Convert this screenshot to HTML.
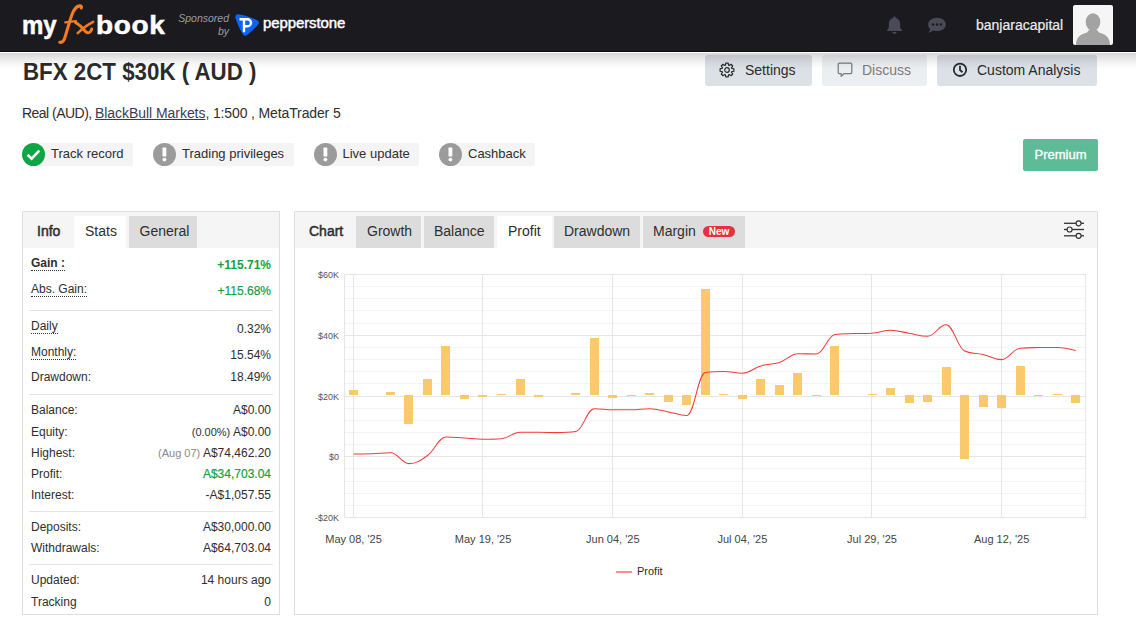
<!DOCTYPE html>
<html>
<head>
<meta charset="utf-8">
<style>
*{box-sizing:border-box;margin:0;padding:0}
html,body{width:1136px;height:619px;overflow:hidden;background:#fff}
body{font-family:"Liberation Sans",sans-serif;color:#2e2e2e;position:relative}
.abs{position:absolute}
#hdr{position:absolute;left:0;top:0;width:1136px;height:52px;background:#1b1a1f;border-bottom:1px solid #0b0a0e;z-index:5}
#shadow{position:absolute;left:0;top:53px;width:1136px;height:18px;z-index:4;
  background:linear-gradient(to bottom,rgba(0,0,0,0.165),rgba(0,0,0,0.1) 25%,rgba(0,0,0,0.045) 55%,rgba(0,0,0,0.012) 80%,rgba(0,0,0,0))}
.logo{position:absolute;font-weight:bold;font-size:26px;line-height:30px;color:#fff;white-space:nowrap}
.spons{position:absolute;font-style:italic;font-size:10.5px;color:#9d9d9d;text-align:right;line-height:13px}
.pep{position:absolute;left:263px;top:14px;font-size:15px;color:#fff;-webkit-text-stroke:0.45px #fff;letter-spacing:-0.1px}
.uname{position:absolute;left:976px;top:17px;font-size:14px;color:#ececec;-webkit-text-stroke:0.2px #ececec}
.avatar{position:absolute;left:1073px;top:5px;width:40px;height:40px;background:#f5f5f5;border-radius:2px;overflow:hidden}
.title{position:absolute;left:22.5px;top:59px;font-size:23px;font-weight:bold;color:#2b2b2b;white-space:nowrap;letter-spacing:0px;transform:scaleX(0.97);transform-origin:0 0}
.sub{position:absolute;left:22px;top:105px;font-size:14px;color:#2e2e2e;white-space:nowrap;letter-spacing:-0.2px}
.sub u{color:#3b3b52;text-decoration:underline}
.badge{position:absolute;top:143px;height:23px;font-size:13px;color:#2e2e2e;white-space:nowrap}
.badge:before{content:"";position:absolute;left:11px;top:0;right:0;bottom:0;background:#f4f4f4;border-radius:2px}
.badge .ic{position:absolute;left:0;top:0;width:23px;height:23px;border-radius:50%}
.badge .tx{position:absolute;top:3px}
.btn{position:absolute;top:55px;height:31px;border-radius:3px;background:#dce0e7;font-size:14px;color:#2a2a2a;white-space:nowrap}
.btn .tx{position:absolute;top:7px}
.premium{position:absolute;left:1023px;top:139px;width:75px;height:32px;background:#5dbb98;border-radius:2px;color:#fff;font-size:13px;text-align:center;line-height:32px;-webkit-text-stroke:0.3px #fff}
.panel{position:absolute;border:1px solid #dedede;background:#fff}
.tabbar{position:absolute;left:0;top:0;right:0;height:36px;background:#f5f5f5}
.tab{position:absolute;top:4px;height:32px;font-size:14px;color:#2e2e2e;white-space:nowrap}
.tab .tx{position:absolute;top:7px}
.row{position:absolute;left:8px;right:8px;font-size:12px;color:#2e2e2e;white-space:nowrap;height:16px}
.row .l{position:absolute;left:0;top:0}
.row .r{position:absolute;right:0;top:0}
.dot{border-bottom:1px dotted #333;padding-bottom:0px}
.sep{position:absolute;left:0;right:6px;height:1px;background:#e3e3e3}
.green{color:#16a040}
</style>
</head>
<body>
<div id="hdr">
  <div class="logo" style="left:22px;top:10px;font-size:25px;letter-spacing:0px;transform:scaleX(0.96);transform-origin:0 0;-webkit-text-stroke:0.5px #fff">my</div>
  <div class="logo" style="left:95.5px;top:10px;font-size:25px;letter-spacing:0.6px;transform:scaleX(1.12);transform-origin:0 0;-webkit-text-stroke:0.5px #fff">book</div>
  <svg class="abs" style="left:55px;top:0" width="42" height="50" viewBox="55 0 42 50">
    <path d="M59.8 42.3 C61.5 42.6 63 41.8 64.2 39.5 C65.5 36.5 69.5 21 72 14.5 C73.8 9.8 76.5 6.3 79.5 5.9 C81.3 5.7 81.8 6.8 81.3 8" fill="none" stroke="#f47b20" stroke-width="3.1" stroke-linecap="round"/>
    <path d="M65.2 22.3 C69 21.8 72.5 21.4 76 21.2" fill="none" stroke="#f47b20" stroke-width="2.2" stroke-linecap="round"/>
    <path d="M75.6 22.6 C79.5 24.5 83 28.5 85.5 31.5 C86.8 33 88.8 33.4 90.3 31.8 C91.2 30.8 91.7 29.8 91.8 28.9" fill="none" stroke="#f47b20" stroke-width="2.9" stroke-linecap="round"/>
    <path d="M77.7 33.1 C81.5 29.5 87.5 24.5 93.2 21.8" fill="none" stroke="#f47b20" stroke-width="2.6" stroke-linecap="round"/>
  </svg>
  <div class="spons" style="left:170px;top:12px;width:59px">Sponsored<br>by</div>
  <svg class="abs" style="left:234px;top:13px" width="26" height="24" viewBox="0 0 26 24">
    <path d="M3.5 1.2 C9 1.5 17 4 23.5 7.5 C25.3 8.5 25.3 10 24.3 11.3 C21 15.5 16.5 19.5 13 22 C11.5 23 10 23 9.2 21.8 C6 17 3 10 1.5 5 C1 3 2 1.2 3.5 1.2 Z" fill="#0b64f8"/>
    <path d="M5.5 6.3 H13.5 A3.5 3.5 0 0 1 13.5 13.3 H10 M10 6.3 V19.3" fill="none" stroke="#fff" stroke-width="2.4"/>
  </svg>
  <div class="pep">pepperstone</div>
  <svg class="abs" style="left:886px;top:16px" width="17" height="19" viewBox="0 0 17 19">
    <path d="M8.5 0.3 C9.5 1.2 10 1.6 10.2 2 C13 2.8 14.2 5.5 14.2 8.5 V11.8 L16 14.2 V15 H1 V14.2 L2.8 11.8 V8.5 C2.8 5.5 4 2.8 6.8 2 C7 1.6 7.5 1.2 8.5 0.3 Z M6.3 16 H10.7 C10.5 17 9.7 17.8 8.5 17.8 C7.3 17.8 6.5 17 6.3 16 Z" fill="#4a4957"/>
  </svg>
  <svg class="abs" style="left:927px;top:17px" width="20" height="17" viewBox="0 0 20 17">
    <path d="M10.2 0.8 C15.2 0.8 18.8 3.8 18.8 7.4 C18.8 11 15.2 14 10.2 14 C8.8 14 7.6 13.8 6.5 13.4 L1.5 16 L3.3 12 C1.8 10.8 1.2 9.2 1.2 7.4 C1.2 3.8 5 0.8 10.2 0.8 Z" fill="#4a4957"/>
    <circle cx="6" cy="7.5" r="1.2" fill="#1b1a1f"/><circle cx="10" cy="7.5" r="1.2" fill="#1b1a1f"/><circle cx="14" cy="7.5" r="1.2" fill="#1b1a1f"/>
  </svg>
  <div class="uname">banjaracapital</div>
  <div class="avatar">
    <svg width="40" height="40" viewBox="0 0 40 40">
      <ellipse cx="20" cy="17" rx="7.3" ry="8.8" fill="#a3a3a3"/>
      <path d="M3 40 C3 32 8 29 14 27.5 L16 25 H24 L26 27.5 C32 29 37 32 37 40 Z" fill="#a3a3a3"/>
    </svg>
  </div>
</div>
<div id="shadow"></div>

<div class="title">BFX 2CT $30K ( AUD )</div>
<div class="sub"><span style="letter-spacing:-0.53px">Real (AUD), </span><u style="letter-spacing:-0.05px">BlackBull Markets</u><span style="letter-spacing:-0.13px">, 1:500 , MetaTrader 5</span></div>

<!-- action buttons -->
<div class="btn" style="left:705px;width:107px">
  <svg class="abs" style="left:14px;top:7px" width="16" height="16" viewBox="0 0 16 16"><path d="M6.78 1.11 L9.22 1.11 L9.63 3.27 L10.19 3.51 L12.02 2.27 L13.73 3.98 L12.49 5.81 L12.73 6.37 L14.89 6.78 L14.89 9.22 L12.73 9.63 L12.49 10.19 L13.73 12.02 L12.02 13.73 L10.19 12.49 L9.63 12.73 L9.22 14.89 L6.78 14.89 L6.37 12.73 L5.81 12.49 L3.98 13.73 L2.27 12.02 L3.51 10.19 L3.27 9.63 L1.11 9.22 L1.11 6.78 L3.27 6.37 L3.51 5.81 L2.27 3.98 L3.98 2.27 L5.81 3.51 L6.37 3.27 Z" fill="none" stroke="#2a2a2a" stroke-width="1.2" stroke-linejoin="round"/><circle cx="8" cy="8" r="2.3" fill="none" stroke="#2a2a2a" stroke-width="1.2"/></svg>
  <span class="tx" style="left:40px">Settings</span>
</div>
<div class="btn" style="left:822px;width:105px;background:#eceff2;color:#7a7a7a">
  <svg class="abs" style="left:15px;top:7px" width="16" height="16" viewBox="0 0 16 16"><path d="M2.3 1.2 H13.7 Q14.8 1.2 14.8 2.3 V10.4 Q14.8 11.5 13.7 11.5 H7.2 L4.2 14.3 V11.5 H2.3 Q1.2 11.5 1.2 10.4 V2.3 Q1.2 1.2 2.3 1.2 Z" fill="none" stroke="#7a7a7a" stroke-width="1.25" stroke-linejoin="round"/></svg>
  <span class="tx" style="left:40px">Discuss</span>
</div>
<div class="btn" style="left:937px;width:160px">
  <svg class="abs" style="left:15px;top:7px" width="16" height="16" viewBox="0 0 16 16"><circle cx="8" cy="7.8" r="6.2" fill="none" stroke="#2a2a2a" stroke-width="1.8"/><path d="M8 3.8 V8 L10.5 10.2" fill="none" stroke="#2a2a2a" stroke-width="1.8"/></svg>
  <span class="tx" style="left:40px">Custom Analysis</span>
</div>

<!-- badges -->
<div class="badge" style="left:22px;width:111px">
  <div class="ic" style="background:#0ea644">
    <svg width="23" height="23" viewBox="0 0 23 23"><path d="M5.5 11.8 L9.6 15.6 L17.3 7.6" fill="none" stroke="#fff" stroke-width="2.6"/></svg>
  </div>
  <span class="tx" style="left:29px">Track record</span>
</div>
<div class="badge" style="left:153px;width:141px">
  <div class="ic" style="background:#9b9b9b">
    <svg width="23" height="23" viewBox="0 0 23 23"><rect x="9.5" y="4.6" width="3.8" height="9" rx="0.6" fill="#fff"/><circle cx="11.4" cy="16.6" r="1.9" fill="#fff"/></svg>
  </div>
  <span class="tx" style="left:29px">Trading privileges</span>
</div>
<div class="badge" style="left:314px;width:105px">
  <div class="ic" style="background:#9b9b9b">
    <svg width="23" height="23" viewBox="0 0 23 23"><rect x="9.5" y="4.6" width="3.8" height="9" rx="0.6" fill="#fff"/><circle cx="11.4" cy="16.6" r="1.9" fill="#fff"/></svg>
  </div>
  <span class="tx" style="left:28.5px">Live update</span>
</div>
<div class="badge" style="left:439px;width:96px">
  <div class="ic" style="background:#9b9b9b">
    <svg width="23" height="23" viewBox="0 0 23 23"><rect x="9.5" y="4.6" width="3.8" height="9" rx="0.6" fill="#fff"/><circle cx="11.4" cy="16.6" r="1.9" fill="#fff"/></svg>
  </div>
  <span class="tx" style="left:29px">Cashback</span>
</div>
<div class="premium">Premium</div>

<!-- left panel -->
<div class="panel" style="left:22px;top:211px;width:258px;height:404px">
  <div class="tabbar"></div>
  <div class="tab" style="left:0;width:51px"><span class="tx" style="left:14px;-webkit-text-stroke:0.5px #2e2e2e">Info</span></div>
  <div class="tab" style="left:51px;width:52px;background:#fff"><span class="tx" style="left:11px">Stats</span></div>
  <div class="tab" style="left:106px;width:68px;background:#dcdcdc"><span class="tx" style="left:10.5px">General</span></div>

  <div class="row" style="top:44px"><span class="l dot" style="font-weight:bold">Gain :</span><span class="r green" style="font-weight:bold;top:2px">+115.71%</span></div>
  <div class="row" style="top:70px"><span class="l dot">Abs. Gain:</span><span class="r green" style="top:2px;-webkit-text-stroke:0.2px #16a040">+115.68%</span></div>
  <div class="sep" style="top:98px;left:6px;right:6px"></div>
  <div class="row" style="top:107px"><span class="l dot">Daily</span><span class="r" style="top:3px">0.32%</span></div>
  <div class="row" style="top:133px"><span class="l dot">Monthly:</span><span class="r" style="top:3px">15.54%</span></div>
  <div class="row" style="top:158px"><span class="l">Drawdown:</span><span class="r">18.49%</span></div>
  <div class="sep" style="top:182px;left:6px;right:6px"></div>
  <div class="row" style="top:191px"><span class="l">Balance:</span><span class="r">A$0.00</span></div>
  <div class="row" style="top:213px"><span class="l">Equity:</span><span class="r"><span style="font-size:11px">(0.00%)</span> A$0.00</span></div>
  <div class="row" style="top:234px"><span class="l">Highest:</span><span class="r"><span style="color:#8a8a8a;font-size:11px">(Aug 07)</span> A$74,462.20</span></div>
  <div class="row" style="top:255px"><span class="l">Profit:</span><span class="r green" style="-webkit-text-stroke:0.2px #16a040">A$34,703.04</span></div>
  <div class="row" style="top:276px"><span class="l">Interest:</span><span class="r">-A$1,057.55</span></div>
  <div class="sep" style="top:299px;left:6px;right:6px"></div>
  <div class="row" style="top:308px"><span class="l">Deposits:</span><span class="r">A$30,000.00</span></div>
  <div class="row" style="top:329px"><span class="l">Withdrawals:</span><span class="r">A$64,703.04</span></div>
  <div class="sep" style="top:352px;left:6px;right:6px"></div>
  <div class="row" style="top:361px"><span class="l">Updated:</span><span class="r">14 hours ago</span></div>
  <div class="row" style="top:383px"><span class="l">Tracking</span><span class="r">0</span></div>
</div>

<!-- chart panel -->
<div class="panel" style="left:294px;top:211px;width:804px;height:404px">
  <div class="tabbar"></div>
  <div class="tab" style="left:0;width:61px"><span class="tx" style="left:14px;-webkit-text-stroke:0.5px #2e2e2e">Chart</span></div>
  <div class="tab" style="left:61px;width:65px;background:#dcdcdc"><span class="tx" style="left:11px">Growth</span></div>
  <div class="tab" style="left:129px;width:70px;background:#dcdcdc"><span class="tx" style="left:10px">Balance</span></div>
  <div class="tab" style="left:202px;width:55px;background:#fff"><span class="tx" style="left:11px">Profit</span></div>
  <div class="tab" style="left:259px;width:86px;background:#dcdcdc"><span class="tx" style="left:10px">Drawdown</span></div>
  <div class="tab" style="left:348px;width:102px;background:#dcdcdc"><span class="tx" style="left:10px">Margin</span>
    <span style="position:absolute;left:60px;top:10px;width:32px;height:11px;border-radius:6px;background:#e5303e;color:#fff;font-size:10px;font-weight:bold;text-align:center;line-height:11px">New</span></div>
  <svg class="abs" style="left:769px;top:8px" width="20" height="20" viewBox="0 0 20 20">
    <g stroke="#333" stroke-width="1.3" fill="none">
      <line x1="0" y1="3.3" x2="20" y2="3.3"/><line x1="0" y1="9.5" x2="20" y2="9.5"/><line x1="0" y1="15.8" x2="20" y2="15.8"/>
    </g>
    <g stroke="#333" stroke-width="1.2" fill="#f5f5f5">
      <circle cx="14.6" cy="3.3" r="2.5"/><circle cx="5.6" cy="9.5" r="2.5"/><circle cx="14.6" cy="15.8" r="2.5"/>
    </g>
  </svg>
</div>

<svg class="abs" style="left:0;top:0;z-index:1;font-family:'Liberation Sans',sans-serif" width="1136" height="619">
<line x1="344.5" y1="274.5" x2="1085.5" y2="274.5" stroke="#e6e6e6" stroke-width="1"/>
<line x1="344.5" y1="286.5" x2="1085.5" y2="286.5" stroke="#f4f4f4" stroke-width="1"/>
<line x1="344.5" y1="298.5" x2="1085.5" y2="298.5" stroke="#f4f4f4" stroke-width="1"/>
<line x1="344.5" y1="310.5" x2="1085.5" y2="310.5" stroke="#f4f4f4" stroke-width="1"/>
<line x1="344.5" y1="323.5" x2="1085.5" y2="323.5" stroke="#f4f4f4" stroke-width="1"/>
<line x1="344.5" y1="335.5" x2="1085.5" y2="335.5" stroke="#e6e6e6" stroke-width="1"/>
<line x1="344.5" y1="347.5" x2="1085.5" y2="347.5" stroke="#f4f4f4" stroke-width="1"/>
<line x1="344.5" y1="359.5" x2="1085.5" y2="359.5" stroke="#f4f4f4" stroke-width="1"/>
<line x1="344.5" y1="371.5" x2="1085.5" y2="371.5" stroke="#f4f4f4" stroke-width="1"/>
<line x1="344.5" y1="383.5" x2="1085.5" y2="383.5" stroke="#f4f4f4" stroke-width="1"/>
<line x1="344.5" y1="396.5" x2="1085.5" y2="396.5" stroke="#e6e6e6" stroke-width="1"/>
<line x1="344.5" y1="408.5" x2="1085.5" y2="408.5" stroke="#f4f4f4" stroke-width="1"/>
<line x1="344.5" y1="420.5" x2="1085.5" y2="420.5" stroke="#f4f4f4" stroke-width="1"/>
<line x1="344.5" y1="432.5" x2="1085.5" y2="432.5" stroke="#f4f4f4" stroke-width="1"/>
<line x1="344.5" y1="444.5" x2="1085.5" y2="444.5" stroke="#f4f4f4" stroke-width="1"/>
<line x1="344.5" y1="456.5" x2="1085.5" y2="456.5" stroke="#e6e6e6" stroke-width="1"/>
<line x1="344.5" y1="468.5" x2="1085.5" y2="468.5" stroke="#f4f4f4" stroke-width="1"/>
<line x1="344.5" y1="481.5" x2="1085.5" y2="481.5" stroke="#f4f4f4" stroke-width="1"/>
<line x1="344.5" y1="493.5" x2="1085.5" y2="493.5" stroke="#f4f4f4" stroke-width="1"/>
<line x1="344.5" y1="505.5" x2="1085.5" y2="505.5" stroke="#f4f4f4" stroke-width="1"/>
<line x1="344.5" y1="517.5" x2="1085.5" y2="517.5" stroke="#e6e6e6" stroke-width="1"/>
<line x1="344.5" y1="274.5" x2="344.5" y2="517.5" stroke="#e6e6e6"/>
<line x1="1085.5" y1="274.5" x2="1085.5" y2="517.5" stroke="#e6e6e6"/>
<line x1="353.5" y1="274.5" x2="353.5" y2="517.5" stroke="#e6e6e6"/>
<line x1="482.5" y1="274.5" x2="482.5" y2="517.5" stroke="#e6e6e6"/>
<line x1="612.5" y1="274.5" x2="612.5" y2="517.5" stroke="#e6e6e6"/>
<line x1="742.5" y1="274.5" x2="742.5" y2="517.5" stroke="#e6e6e6"/>
<line x1="871.5" y1="274.5" x2="871.5" y2="517.5" stroke="#e6e6e6"/>
<line x1="1001.5" y1="274.5" x2="1001.5" y2="517.5" stroke="#e6e6e6"/>
<rect x="349" y="390" width="9" height="5" fill="#fac96c"/>
<rect x="386" y="392" width="9" height="3" fill="#fac96c"/>
<rect x="404" y="395" width="9" height="29" fill="#fac96c"/>
<rect x="423" y="379" width="9" height="16" fill="#fac96c"/>
<rect x="441" y="346" width="9" height="49" fill="#fac96c"/>
<rect x="460" y="395" width="9" height="4" fill="#fac96c"/>
<rect x="478" y="395" width="9" height="2" fill="#fac96c"/>
<rect x="497" y="394" width="9" height="1" fill="#fac96c"/>
<rect x="516" y="379" width="9" height="16" fill="#fac96c"/>
<rect x="534" y="395" width="9" height="2" fill="#fac96c"/>
<rect x="571" y="393" width="9" height="2" fill="#fac96c"/>
<rect x="590" y="338" width="9" height="57" fill="#fac96c"/>
<rect x="608" y="395" width="9" height="3" fill="#fac96c"/>
<rect x="627" y="395" width="9" height="1" fill="#fac96c"/>
<rect x="645" y="393" width="9" height="2" fill="#fac96c"/>
<rect x="664" y="395" width="9" height="7" fill="#fac96c"/>
<rect x="682" y="395" width="9" height="10" fill="#fac96c"/>
<rect x="701" y="289" width="9" height="106" fill="#fac96c"/>
<rect x="719" y="394" width="9" height="1" fill="#fac96c"/>
<rect x="738" y="395" width="9" height="4" fill="#fac96c"/>
<rect x="756" y="379" width="9" height="16" fill="#fac96c"/>
<rect x="775" y="385" width="9" height="10" fill="#fac96c"/>
<rect x="793" y="373" width="9" height="22" fill="#fac96c"/>
<rect x="812" y="395" width="9" height="1" fill="#fac96c"/>
<rect x="830" y="346" width="9" height="49" fill="#fac96c"/>
<rect x="868" y="394" width="9" height="1" fill="#fac96c"/>
<rect x="886" y="388" width="9" height="7" fill="#fac96c"/>
<rect x="905" y="395" width="9" height="8" fill="#fac96c"/>
<rect x="923" y="395" width="9" height="7" fill="#fac96c"/>
<rect x="942" y="367" width="9" height="28" fill="#fac96c"/>
<rect x="960" y="395" width="9" height="64" fill="#fac96c"/>
<rect x="979" y="395" width="9" height="12" fill="#fac96c"/>
<rect x="997" y="395" width="9" height="13" fill="#fac96c"/>
<rect x="1016" y="366" width="9" height="29" fill="#fac96c"/>
<rect x="1034" y="395" width="9" height="1" fill="#fac96c"/>
<rect x="1053" y="394" width="9" height="1" fill="#fac96c"/>
<rect x="1071" y="395" width="9" height="8" fill="#fac96c"/>
<path d="M 353.50 454.00 C 353.50 454.00 364.61 454.00 372.02 453.80 C 379.43 453.60 383.13 452.80 390.54 452.80 C 397.94 452.80 401.65 463.60 409.05 463.60 C 416.46 463.60 420.16 460.84 427.57 455.50 C 434.98 450.16 438.68 436.90 446.09 436.90 C 453.50 436.90 457.20 437.64 464.61 438.10 C 472.02 438.56 475.72 439.20 483.13 439.20 C 490.53 439.20 494.24 439.20 501.64 438.70 C 509.05 438.20 512.75 432.20 520.16 432.20 C 527.57 432.20 531.27 432.22 538.68 432.30 C 546.09 432.38 549.79 432.60 557.20 432.60 C 564.61 432.60 568.31 432.60 575.72 431.60 C 583.12 430.60 586.83 408.80 594.23 408.80 C 601.64 408.80 605.34 409.80 612.75 409.80 C 620.16 409.80 623.86 409.80 631.27 409.80 C 638.68 409.80 642.38 408.80 649.79 408.80 C 657.20 408.80 660.90 410.56 668.31 411.90 C 675.71 413.24 679.42 415.50 686.82 415.50 C 694.23 415.50 697.93 373.50 705.34 372.50 C 712.75 371.50 716.45 371.50 723.86 371.50 C 731.27 371.50 734.97 373.20 742.38 373.20 C 749.79 373.20 753.49 368.04 760.90 365.90 C 768.30 363.76 772.01 364.92 779.41 362.50 C 786.82 360.08 790.52 353.80 797.93 353.80 C 805.34 353.80 809.04 353.90 816.45 353.90 C 823.86 353.90 827.56 335.40 834.97 334.50 C 842.38 333.60 846.08 333.86 853.49 333.60 C 860.89 333.34 864.60 333.60 872.00 333.20 C 879.41 332.80 883.11 330.30 890.52 330.30 C 897.93 330.30 901.63 332.00 909.04 333.20 C 916.45 334.40 920.15 336.30 927.56 336.30 C 934.97 336.30 938.67 324.70 946.08 324.70 C 953.48 324.70 957.19 347.60 964.59 351.00 C 972.00 354.40 975.70 352.68 983.11 354.40 C 990.52 356.12 994.22 359.60 1001.63 359.60 C 1009.04 359.60 1012.74 348.80 1020.15 348.20 C 1027.56 347.60 1031.26 347.70 1038.67 347.60 C 1046.07 347.50 1049.78 347.50 1057.18 347.50 C 1064.59 347.50 1075.70 350.60 1075.70 350.60" fill="none" stroke="#f23c3c" stroke-width="1.05"/>
<text x="339" y="278.0" text-anchor="end" font-size="9" fill="#555">$60K</text>
<text x="339" y="338.8" text-anchor="end" font-size="9" fill="#555">$40K</text>
<text x="339" y="399.5" text-anchor="end" font-size="9" fill="#555">$20K</text>
<text x="339" y="460.2" text-anchor="end" font-size="9" fill="#555">$0</text>
<text x="339" y="521.0" text-anchor="end" font-size="9" fill="#555">-$20K</text>
<text x="353.5" y="543" text-anchor="middle" font-size="11" fill="#444">May 08, '25</text>
<text x="483.1" y="543" text-anchor="middle" font-size="11" fill="#444">May 19, '25</text>
<text x="612.8" y="543" text-anchor="middle" font-size="11" fill="#444">Jun 04, '25</text>
<text x="742.4" y="543" text-anchor="middle" font-size="11" fill="#444">Jul 04, '25</text>
<text x="872.0" y="543" text-anchor="middle" font-size="11" fill="#444">Jul 29, '25</text>
<text x="1001.6" y="543" text-anchor="middle" font-size="11" fill="#444">Aug 12, '25</text>
<line x1="616" y1="572" x2="632" y2="572" stroke="#f88f8f" stroke-width="2"/>
<text x="637" y="575" font-size="11" fill="#2a2a2a">Profit</text>
</svg>
</body>
</html>
